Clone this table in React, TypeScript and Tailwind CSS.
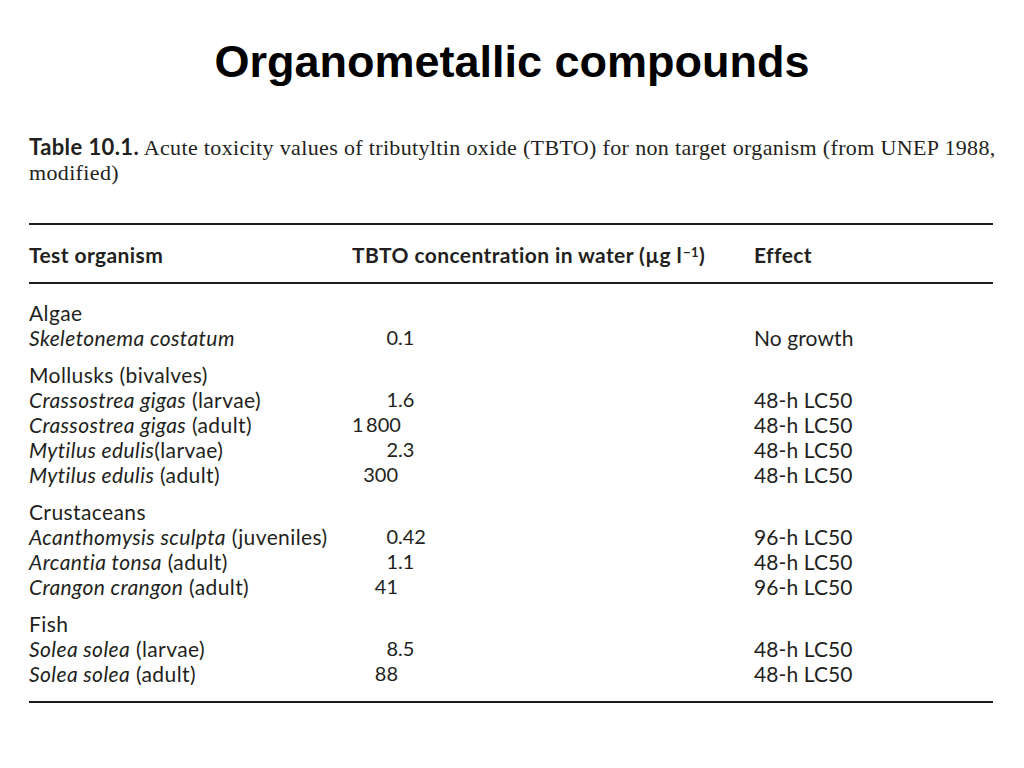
const groups = [
  {
    name: 'Algae',
    rows: [{ sp: 'Skeletonema costatum', note: '', int: '0', frac: '.1', effect: 'No growth' }],
  },
  {
    name: 'Mollusks (bivalves)',
    rows: [
      { sp: 'Crassostrea gigas', note: ' (larvae)', int: '1', frac: '.6', effect: '48-h LC50' },
      { sp: 'Crassostrea gigas', note: ' (adult)', int: '1\u2009800', frac: '', effect: '48-h LC50' },
      { sp: 'Mytilus edulis', note: '(larvae)', int: '2', frac: '.3', effect: '48-h LC50' },
      { sp: 'Mytilus edulis', note: ' (adult)', int: '300', frac: '', effect: '48-h LC50' },
    ],
  },
  {
    name: 'Crustaceans',
    rows: [
      { sp: 'Acanthomysis sculpta', note: ' (juveniles)', int: '0', frac: '.42', effect: '96-h LC50' },
      { sp: 'Arcantia tonsa', note: ' (adult)', int: '1', frac: '.1', effect: '48-h LC50' },
      { sp: 'Crangon crangon', note: ' (adult)', int: '41', frac: '', effect: '96-h LC50' },
    ],
  },
  {
    name: 'Fish',
    rows: [
      { sp: 'Solea solea', note: ' (larvae)', int: '8', frac: '.5', effect: '48-h LC50' },
      { sp: 'Solea solea', note: ' (adult)', int: '88', frac: '', effect: '48-h LC50' },
    ],
  },
]

export default function App() {
  return (
    <div className="w-[1024px] h-[768px] bg-white overflow-hidden">
      {/* Slide title */}
      <h1 className="pt-[38px] text-center text-[45px] leading-[48px] font-bold text-black font-['Liberation_Sans',Arial,sans-serif]">
        Organometallic compounds
      </h1>

      {/* Caption */}
      <div className="mt-[48px] ml-[29px] text-[22px] leading-[25px] tracking-[0.35px] text-[#231f20] font-['Liberation_Serif',serif]">
        <p className="whitespace-nowrap">
          <span className="font-bold tracking-[0.4px] font-['Lato',sans-serif]">Table 10.1.</span> Acute toxicity values of tributyltin oxide (TBTO) for non target organism (from UNEP 1988,
        </p>
        <p>modified)</p>
      </div>

      {/* Table */}
      <div className="mt-[38px] ml-[29px] w-[964px] text-[21px] leading-[25px] tracking-[0.4px] text-[#231f20] font-['Lato',sans-serif]">
        <div className="border-t-2 border-[#1c1c1c]" />
        <div className="grid grid-cols-[323px_402px_1fr] pt-[17px] pb-[15px] font-bold">
          <div>Test organism</div>
          <div className="whitespace-nowrap">
            TBTO concentration in water (µg l<sup className="text-[13px] ml-[1px]">−1</sup>)
          </div>
          <div>Effect</div>
        </div>
        <div className="border-t-2 border-[#1c1c1c]" />

        <div className="pt-[16px] pb-[15px] flex flex-col gap-[12px]">
          {groups.map(g => (
            <div key={g.name}>
              <div>{g.name}</div>
              {g.rows.map((r, i) => (
                <div key={i} className="grid grid-cols-[323px_402px_1fr]">
                  <div className="whitespace-nowrap">
                    <i>{r.sp}</i>
                    {r.note}
                  </div>
                  <div className="flex text-[20px] tracking-normal">
                    <span className="w-[46px] text-right whitespace-nowrap">{r.int}</span>
                    <span>{r.frac}</span>
                  </div>
                  <div className="tracking-[0.1px]">{r.effect}</div>
                </div>
              ))}
            </div>
          ))}
        </div>
        <div className="border-t-2 border-[#1c1c1c]" />
      </div>
    </div>
  )
}
